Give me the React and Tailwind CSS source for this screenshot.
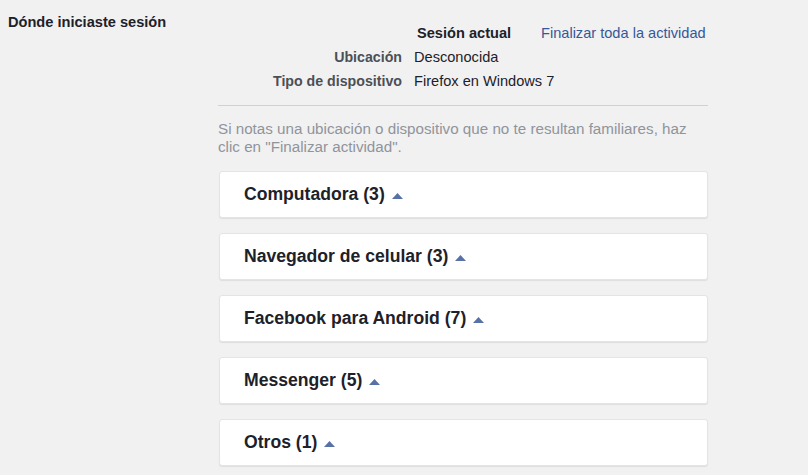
const devices = [
  { name: "Computadora", count: 3 },
  { name: "Navegador de celular", count: 3 },
  { name: "Facebook para Android", count: 7 },
  { name: "Messenger", count: 5 },
  { name: "Otros", count: 1 },
];

const Caret = () => (
  <svg width="11" height="6" viewBox="0 0 11 6" className="ml-[7px] mt-[3px]">
    <path d="M0 6 L5.5 0 L11 6 Z" fill="#5872a8" />
  </svg>
);

export default function App() {
  return (
    <div className="min-h-[475px] w-[808px] bg-[#f1f1f1] font-['Liberation_Sans',Arial,sans-serif] text-[#1d2129]">
      <div className="flex">
        <div className="w-[218px] shrink-0 pl-2 pt-[13px] text-[14.6px] font-bold leading-[18px]">
          Dónde iniciaste sesión
        </div>

        <div className="w-[490px] pt-[21px]">
          <div className="grid grid-cols-[184px_1fr] gap-x-3 text-[14.6px] leading-6">
            <div />
            <div className="flex">
              <span className="w-[127px] pl-[3px] font-bold">Sesión actual</span>
              <span className="text-[#365899]">Finalizar toda la actividad</span>
            </div>
            <div className="text-right text-[14.2px] font-bold text-[#4b4f56]">Ubicación</div>
            <div>Desconocida</div>
            <div className="text-right text-[14.2px] font-bold text-[#4b4f56]">Tipo de dispositivo</div>
            <div>Firefox en Windows 7</div>
          </div>

          <div className="mt-[12px] border-t border-[#cfd1d5]" />

          <p className="pt-[14px] pr-2 text-[15.2px] leading-[18px] text-[#90949c]">
            Si notas una ubicación o dispositivo que no te resultan familiares, haz clic en "Finalizar actividad".
          </p>

          <div className="mt-[15px] flex flex-col gap-[15px]">
            {devices.map((d) => (
              <div
                key={d.name}
                className="ml-px flex h-[47px] items-center rounded-[3px] border border-[#e3e4e6] bg-white pl-[24px] shadow-[0_1px_1px_rgba(0,0,0,0.08)]"
              >
                <span className="text-[17.6px] font-bold text-[#1d2129]">
                  {d.name} ({d.count})
                </span>
                <Caret />
              </div>
            ))}
          </div>
        </div>
      </div>
    </div>
  );
}
